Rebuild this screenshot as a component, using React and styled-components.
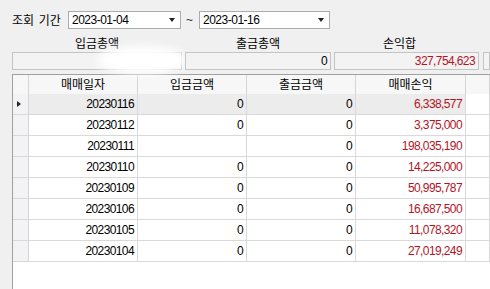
import React from "react";
import styled, { createGlobalStyle } from "styled-components";

const Global = createGlobalStyle`
  html, body { margin: 0; padding: 0; background: #f0f0f0; }
  body { font-family: "Liberation Sans", "Noto Sans CJK KR", sans-serif; color: #000; }
`;

const Page = styled.div`
  width: 490px;
  height: 289px;
  overflow: hidden;
  display: flex;
  flex-direction: column;
  background: #f0f0f0;
`;

const Toolbar = styled.div`
  display: flex;
  align-items: center;
  height: 18px;
  margin-top: 11px;
  padding-left: 12px;
`;

const FieldLabel = styled.span`
  width: 56px;
  font-family: "Noto Sans CJK KR", sans-serif;
  font-size: 12px;
  line-height: 18px;
  word-spacing: 2px;
`;

const Combo = styled.div`
  box-sizing: border-box;
  width: ${(p) => p.$w}px;
  height: 18px;
  background: #fff;
  border: 1px solid #acacac;
  display: flex;
  align-items: center;
  justify-content: space-between;
  padding: 0 5px 0 3px;
`;

const ComboText = styled.span`
  font-size: 12px;
  letter-spacing: -0.5px;
  line-height: 16px;
`;

const ComboArrow = styled.span`
  width: 0;
  height: 0;
  border-left: 3px solid transparent;
  border-right: 3px solid transparent;
  border-top: 4px solid #222;
`;

const Tilde = styled.span`
  font-size: 12px;
  margin: 0 6px 0 5px;
  color: #333;
`;

const SummaryLabels = styled.div`
  display: flex;
  height: 15px;
  margin-top: 6px;
  padding-left: 12px;
`;

const SummaryLabel = styled.div`
  width: ${(p) => p.$w}px;
  margin-right: ${(p) => p.$gap}px;
  text-align: center;
  font-family: "Noto Sans CJK KR", sans-serif;
  font-size: 12px;
  line-height: 15px;
  transform: translateX(${(p) => p.$dx || 0}px);
`;

const SummaryBoxes = styled.div`
  display: flex;
  height: 18px;
  margin-top: 2px;
  padding-left: 12px;
`;

const SummaryBox = styled.div`
  position: relative;
  box-sizing: border-box;
  flex: ${(p) => (p.$w ? `0 0 ${p.$w}px` : "1 0 auto")};
  margin-right: ${(p) => p.$gap || 0}px;
  height: 18px;
  background: #f3f3f3;
  border: 1px solid #c4c4c4;
  text-align: right;
  padding-right: 3px;
  font-size: 12px;
  letter-spacing: -0.6px;
  line-height: 16px;
  color: ${(p) => (p.$red ? "#b3141f" : "#000")};
`;

const Smudge = styled.div`
  position: absolute;
  left: 84px;
  top: -7px;
  width: 90px;
  height: 28px;
  border-radius: 50%;
  background: #fff;
  filter: blur(4px);
`;

const Grid = styled.div`
  flex: 1;
  margin-top: 4px;
  margin-left: 12px;
  background: #fff;
  border-left: 1px solid #a0a0a0;
  border-top: 1px solid #a0a0a0;
`;

const Row = styled.div`
  display: grid;
  grid-template-columns: 16px 109px 109px 109px 110px 1fr;
  height: ${(p) => (p.$head ? 19 : 21)}px;
`;

const Cell = styled.div`
  box-sizing: border-box;
  border-right: 1px solid #d9d9d9;
  border-bottom: 1px solid #d9d9d9;
  display: flex;
  align-items: center;
  justify-content: flex-end;
  padding-right: 3px;
  font-size: 12px;
  letter-spacing: -0.6px;
  background: ${(p) => (p.$sel ? "#ececec" : "#fff")};
  color: ${(p) => (p.$red ? "#b3141f" : "#000")};
`;

const HeadCell = styled.div`
  box-sizing: border-box;
  border-right: 1px solid #d4d4d4;
  border-bottom: 1px solid #d4d4d4;
  background: #f7f7f7;
  display: flex;
  align-items: center;
  justify-content: center;
  padding-bottom: 3px;
  font-family: "Noto Sans CJK KR", sans-serif;
  font-size: 12px;
`;

const RowHead = styled.div`
  box-sizing: border-box;
  border-right: 1px solid #d4d4d4;
  border-bottom: 1px solid #d9d9d9;
  background: #f3f3f6;
  display: flex;
  align-items: center;
  padding-left: 4px;
`;

const Marker = styled.span`
  width: 0;
  height: 0;
  border-top: 3px solid transparent;
  border-bottom: 3px solid transparent;
  border-left: 4px solid #222;
`;

const rows = [
  ["20230116", "0", "0", "6,338,577"],
  ["20230112", "0", "0", "3,375,000"],
  ["20230111", "", "0", "198,035,190"],
  ["20230110", "0", "0", "14,225,000"],
  ["20230109", "0", "0", "50,995,787"],
  ["20230106", "0", "0", "16,687,500"],
  ["20230105", "0", "0", "11,078,320"],
  ["20230104", "0", "0", "27,019,249"],
];

export default function App() {
  return (
    <Page>
      <Global />
      <Toolbar>
        <FieldLabel>조회 기간</FieldLabel>
        <Combo $w={113}>
          <ComboText>2023-01-04</ComboText>
          <ComboArrow />
        </Combo>
        <Tilde>~</Tilde>
        <Combo $w={131}>
          <ComboText>2023-01-16</ComboText>
          <ComboArrow />
        </Combo>
      </Toolbar>
      <SummaryLabels>
        <SummaryLabel $w={170} $gap={3}>입금총액</SummaryLabel>
        <SummaryLabel $w={146} $gap={3}>출금총액</SummaryLabel>
        <SummaryLabel $w={145} $gap={4} $dx={-7}>손익합</SummaryLabel>
      </SummaryLabels>
      <SummaryBoxes>
        <SummaryBox $w={170} $gap={3}>
          <Smudge />
        </SummaryBox>
        <SummaryBox $w={146} $gap={3}>0</SummaryBox>
        <SummaryBox $w={145} $gap={4} $red>327,754,623</SummaryBox>
        <SummaryBox />
      </SummaryBoxes>
      <Grid>
        <Row $head>
          <HeadCell />
          <HeadCell>매매일자</HeadCell>
          <HeadCell>입금금액</HeadCell>
          <HeadCell>출금금액</HeadCell>
          <HeadCell>매매손익</HeadCell>
          <HeadCell />
        </Row>
        {rows.map((r, i) => (
          <Row key={r[0]}>
            <RowHead>{i === 0 && <Marker />}</RowHead>
            <Cell $sel={i === 0}>{r[0]}</Cell>
            <Cell $sel={i === 0}>{r[1]}</Cell>
            <Cell $sel={i === 0}>{r[2]}</Cell>
            <Cell $sel={i === 0} $red>{r[3]}</Cell>
            <Cell />
          </Row>
        ))}
      </Grid>
    </Page>
  );
}
